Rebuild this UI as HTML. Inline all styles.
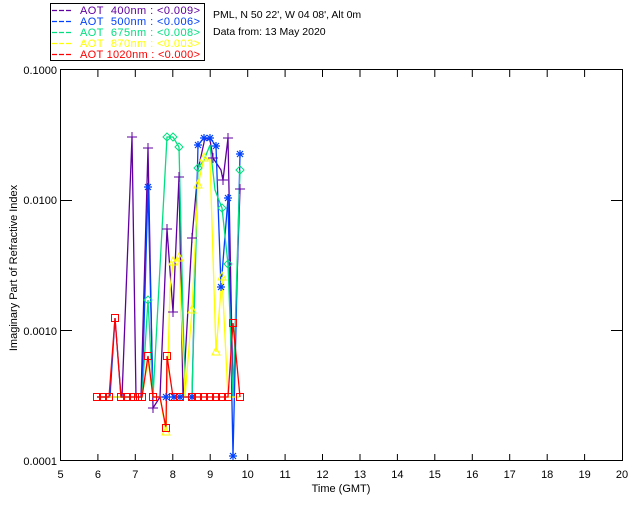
<!DOCTYPE html>
<html><head><meta charset="utf-8"><style>
html,body{margin:0;padding:0;background:#fff;}
body{width:640px;height:512px;overflow:hidden;position:relative;font-family:"Liberation Sans","DejaVu Sans",sans-serif;}
</style></head><body>
<svg width="640" height="512" viewBox="0 0 640 512" xmlns="http://www.w3.org/2000/svg" font-family="Liberation Sans, DejaVu Sans, sans-serif" font-size="11">
<defs>
<g id="sq"><rect x="-3.5" y="-3.5" width="7" height="7" fill="none" stroke="#f00" stroke-width="1"/></g>
<g id="pl"><path d="M-5 0H5M0 -5V5" stroke="#6000a0" stroke-width="1"/></g>
<g id="st"><path d="M-4 0H4M0 -4V4M-3 -3L3 3M-3 3L3 -3" stroke="#0040ff" stroke-width="1.2"/></g>
<g id="di"><path d="M0 -4L4 0L0 4L-4 0Z" fill="none" stroke="#00e080" stroke-width="1"/></g>
<g id="tr"><path d="M0 -5L4 3H-4Z" fill="none" stroke="#ffff00" stroke-width="1"/></g>
</defs>
<!-- legend -->
<rect x="50.5" y="3.5" width="154" height="57" fill="none" stroke="#000"/>
<g font-size="11">
<g stroke-width="1.2">
<path d="M52 10.5H72" stroke="#6000a0" stroke-dasharray="5,2"/>
<path d="M52 21.5H72" stroke="#0040ff" stroke-dasharray="5,2"/>
<path d="M52 32.5H72" stroke="#00e080" stroke-dasharray="5,2"/>
<path d="M52 43.5H72" stroke="#ffff00" stroke-dasharray="5,2"/>
<path d="M52 54.5H72" stroke="#ff0000" stroke-dasharray="5,2"/>
</g>
<text x="80" y="14" fill="#6000a0" textLength="120" lengthAdjust="spacing">AOT&#160;&#160;400nm : &lt;0.009&gt;</text>
<text x="80" y="25" fill="#0040ff" textLength="120" lengthAdjust="spacing">AOT&#160;&#160;500nm : &lt;0.006&gt;</text>
<text x="80" y="36" fill="#00e080" textLength="120" lengthAdjust="spacing">AOT&#160;&#160;675nm : &lt;0.008&gt;</text>
<text x="80" y="47" fill="#ffff00" textLength="120" lengthAdjust="spacing">AOT&#160;&#160;870nm : &lt;0.003&gt;</text>
<text x="80" y="58" fill="#ff0000" textLength="120" lengthAdjust="spacing">AOT 1020nm : &lt;0.000&gt;</text>
<text x="213" y="18" fill="#000" font-size="10.5">PML, N 50 22', W 04 08', Alt 0m</text>
<text x="213" y="35" fill="#000" font-size="10.5">Data from: 13 May 2020</text>
</g>
<!-- axes -->
<rect x="60.5" y="69.5" width="562" height="391" fill="none" stroke="#000" stroke-width="1"/>
<g stroke="#000">
<path d="M97.9 461V454M135.3 461V454M172.8 461V454M210.2 461V454M247.7 461V454M285.1 461V454M322.5 461V454M360 461V454M397.4 461V454M434.8 461V454M472.3 461V454M509.7 461V454M547.2 461V454M584.6 461V454"/>
<path d="M97.9 70V77M135.3 70V77M172.8 70V77M210.2 70V77M247.7 70V77M285.1 70V77M322.5 70V77M360 70V77M397.4 70V77M434.8 70V77M472.3 70V77M509.7 70V77M547.2 70V77M584.6 70V77"/>
<path d="M61 200.5H72M61 330.5H72M622 200.5H611M622 330.5H611"/>
</g>
<g font-size="11" fill="#000" text-anchor="end">
<text x="57" y="74">0.1000</text><text x="57" y="204">0.0100</text><text x="57" y="335">0.0010</text><text x="57" y="465">0.0001</text>
</g>
<g font-size="11" fill="#000" text-anchor="middle">
<text x="60.5" y="478">5</text><text x="97.9" y="478">6</text><text x="135.3" y="478">7</text><text x="172.8" y="478">8</text><text x="210.2" y="478">9</text><text x="247.7" y="478">10</text><text x="285.1" y="478">11</text><text x="322.5" y="478">12</text><text x="360" y="478">13</text><text x="397.4" y="478">14</text><text x="434.8" y="478">15</text><text x="472.3" y="478">16</text><text x="509.7" y="478">17</text><text x="547.2" y="478">18</text><text x="584.6" y="478">19</text><text x="622" y="478">20</text>
<text x="341" y="492">Time (GMT)</text>
<text transform="translate(17,268) rotate(-90)">Imaginary Part of Refractive Index</text>
</g>
<!-- data -->
<g fill="none" stroke-width="1.3">
<polyline stroke="#6000a0" points="97,397 104,397 110,397 117,397 122,397 132,137 136,397 141,397 148,148 153,408 160,397 167,229 173,312 179,177 183,397 192,238 198,170 205,138 210,140 213,158 221,170 223,180 228,138 233,397 240,189"/>
<polyline stroke="#0040ff" points="97,397 104,397 110,397 115,318 121,397 129,397 136,397 142,397 148,187 153,397 160,397 166,397 174,397 180,397 192,397 198,145 204,138 210,138 216,146 221,287 228,198 233,456 240,154"/>
<polyline stroke="#00e080" points="104,397 110,397 117,397 123,397 130,397 136,397 142,397 148,300 153,397 167,137 173,137 179,147 185,397 192,397 198,168 204,160 210,145 215,190 222,208 228,264 233,397 240,170"/>
<polyline stroke="#ffff00" points="97,397 104,397 117,397 130,397 142,397 148,360 153,397 160,397 166,432 170,290 173,262 179,258 185,397 192,310 198,185 204,158 210,160 216,352 222,277 228,397 233,397 240,397"/>
<polyline stroke="#ff0000" points="97,397 103,397 109,397 115,318 121,397 127,397 133,397 138,397 142,397 148,356 153,397 160,397 166,428 167,356 173,397 180,397 192,397 198,397 204,397 210,397 216,397 222,397 228,397 233,323 240,397"/>
</g>
<g>
<use href="#pl" x="132" y="137"/><use href="#pl" x="148" y="148"/><use href="#pl" x="153" y="408"/><use href="#pl" x="167" y="229"/><use href="#pl" x="173" y="312"/><use href="#pl" x="179" y="177"/><use href="#pl" x="192" y="238"/><use href="#pl" x="213" y="158"/><use href="#pl" x="223" y="180"/><use href="#pl" x="228" y="138"/><use href="#pl" x="240" y="189"/>
<use href="#st" x="148" y="187"/><use href="#st" x="198" y="145"/><use href="#st" x="204" y="138"/><use href="#st" x="210" y="138"/><use href="#st" x="216" y="146"/><use href="#st" x="221" y="287"/><use href="#st" x="228" y="198"/><use href="#st" x="233" y="456"/><use href="#st" x="240" y="154"/><use href="#st" x="166" y="397"/><use href="#st" x="174" y="397"/><use href="#st" x="180" y="397"/><use href="#st" x="192" y="397"/>
<use href="#di" x="148" y="300"/><use href="#di" x="167" y="137"/><use href="#di" x="173" y="137"/><use href="#di" x="179" y="147"/><use href="#di" x="198" y="168"/><use href="#di" x="222" y="208"/><use href="#di" x="228" y="264"/><use href="#di" x="240" y="170"/>
<use href="#tr" x="166" y="432"/><use href="#tr" x="173" y="262"/><use href="#tr" x="179" y="258"/><use href="#tr" x="192" y="310"/><use href="#tr" x="198" y="185"/><use href="#tr" x="204" y="158"/><use href="#tr" x="216" y="352"/><use href="#tr" x="222" y="277"/>
<use href="#sq" x="97" y="397"/><use href="#sq" x="103" y="397"/><use href="#sq" x="109" y="397"/><use href="#sq" x="115" y="318"/><use href="#sq" x="121" y="397"/><use href="#sq" x="127" y="397"/><use href="#sq" x="133" y="397"/><use href="#sq" x="138" y="397"/><use href="#sq" x="142" y="397"/><use href="#sq" x="148" y="356"/><use href="#sq" x="153" y="397"/><use href="#sq" x="166" y="428"/><use href="#sq" x="167" y="356"/><use href="#sq" x="173" y="397"/><use href="#sq" x="180" y="397"/><use href="#sq" x="192" y="397"/><use href="#sq" x="198" y="397"/><use href="#sq" x="204" y="397"/><use href="#sq" x="210" y="397"/><use href="#sq" x="216" y="397"/><use href="#sq" x="222" y="397"/><use href="#sq" x="228" y="397"/><use href="#sq" x="233" y="323"/><use href="#sq" x="240" y="397"/>
</g>
</svg>
</body></html>
